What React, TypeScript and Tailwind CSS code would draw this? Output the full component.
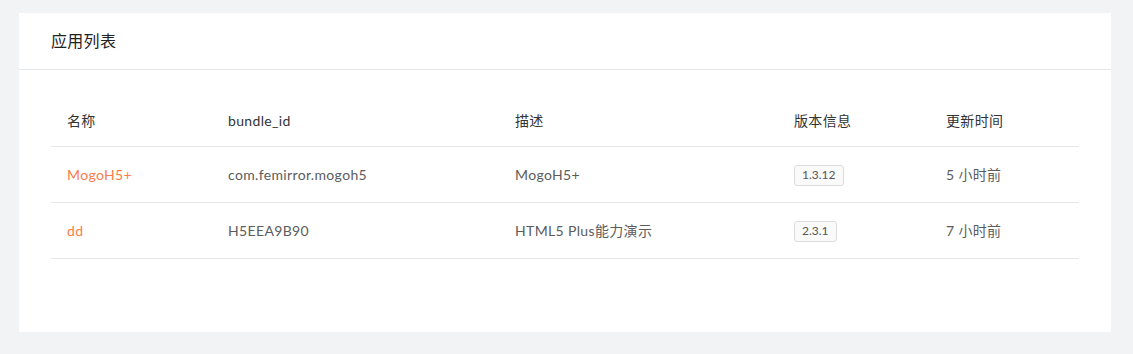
import React from "react";

const apps = [
  { name: "MogoH5+", bundle: "com.femirror.mogoh5", desc: "MogoH5+", version: "1.3.12", updated: "5 小时前" },
  { name: "dd", bundle: "H5EEA9B90", desc: "HTML5 Plus能力演示", version: "2.3.1", updated: "7 小时前" },
];

const cols = "grid grid-cols-[161px_287px_279px_152px_1fr] items-center";

export default function App() {
  return (
    <div
      className="min-h-[354px] bg-[#f2f3f5] pt-[13px] pl-[19px] pr-[22px] pb-[22px]"
      style={{ fontFamily: 'Lato, "Noto Sans CJK SC", sans-serif' }}
    >
      <div className="bg-white h-[319px]">
        {/* Card header */}
        <div className="h-[57px] border-b border-[#e5e6e8] flex items-center px-8">
          <h2 className="text-[16px] text-[#222] leading-none tracking-[0.3px]">应用列表</h2>
        </div>

        {/* Table */}
        <div className="px-8 pt-[25px]">
          <div className={`${cols} h-[52px] border-b border-[#e5e6e8] text-[14px] text-[#333] tracking-[0.35px]`}>
            <div className="px-4">名称</div>
            <div className="px-4">bundle_id</div>
            <div className="px-4">描述</div>
            <div className="px-4">版本信息</div>
            <div className="px-4">更新时间</div>
          </div>
          {apps.map((app) => (
            <div
              key={app.bundle}
              className={`${cols} h-[56px] border-b border-[#e5e6e8] text-[14px] text-[#5c5c5c] tracking-[0.35px]`}
            >
              <div className="px-4 text-[#fa7c48]">{app.name}</div>
              <div className="px-4">{app.bundle}</div>
              <div className="px-4">{app.desc}</div>
              <div className="px-4">
                <span className="inline-flex items-center h-[21px] px-[7px] border border-[#dcdcdc] rounded-[3px] bg-[#fafafa] text-[12px] text-[#555] tracking-normal">
                  {app.version}
                </span>
              </div>
              <div className="px-4">{app.updated}</div>
            </div>
          ))}
        </div>
      </div>
    </div>
  );
}
